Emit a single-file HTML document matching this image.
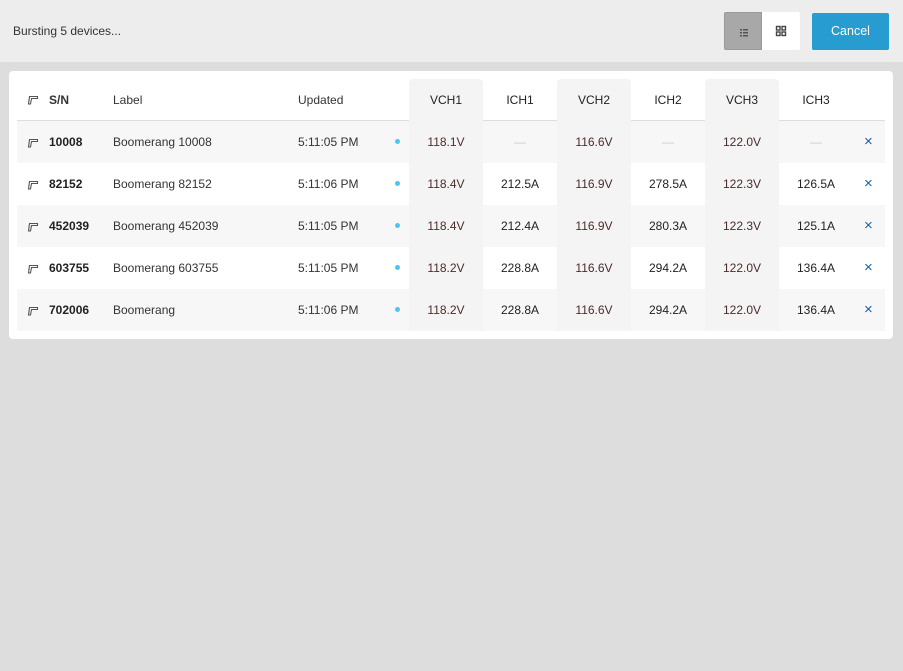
<!DOCTYPE html><html><head><style>
body{margin:0;width:903px;height:671px;background:#dddddd;font-family:"Liberation Sans",sans-serif;font-size:12px;color:#333;position:relative;overflow:hidden}
.top{position:absolute;left:0;top:0;width:903px;height:62px;background:#ededed}
.top .t{position:absolute;left:13px;top:24px;font-size:12px;color:#333}
.vb{position:absolute;top:12px;width:38px;height:38px}
.card{position:absolute;left:9px;top:71px;width:884px;height:268px;background:#fff;border-radius:4px}
.c{position:absolute;height:42px;line-height:42px}
.shade{position:absolute;top:79px;width:74px;height:251px;background:#f4f4f4;border-radius:4px 4px 0 0}
.row{position:absolute;left:17px;width:868px;height:42px}
.v{color:#4a2c2c;text-align:center;width:74px}
.a{text-align:center;width:74px;color:#222}
.dot{position:absolute;width:5px;height:5px;border-radius:50%;background:#4fc3f7}
</style></head><body>
<div class="top"><div class="t">Bursting 5 devices...</div>
<div class="vb" style="left:724px;background:#a8a8a8;border:1px solid #999;box-sizing:border-box;border-radius:2px 0 0 2px"><svg width="38" height="38"><g fill="#555"><rect x="15" y="16" width="2" height="1.5"/><rect x="18" y="16" width="5" height="1.5"/><rect x="15" y="19" width="2" height="1.5"/><rect x="18" y="19" width="5" height="1.5"/><rect x="15" y="22" width="2" height="1.5"/><rect x="18" y="22" width="5" height="1.5"/></g></svg></div>
<div class="vb" style="left:762px;background:#fff;border-radius:0 2px 2px 0"><svg width="38" height="38"><g fill="none" stroke="#444" stroke-width="1.4"><rect x="14.5" y="14.5" width="3.5" height="3.5"/><rect x="20" y="14.5" width="3.5" height="3.5"/><rect x="14.5" y="20" width="3.5" height="3.5"/><rect x="20" y="20" width="3.5" height="3.5"/></g></svg></div>
<div style="position:absolute;left:812px;top:13px;width:77px;height:37px;background:#279cd0;border-radius:2px;color:#fff;text-align:center;line-height:37px;font-size:12.5px">Cancel</div>
</div>
<div class="card"></div>
<div class="row" style="top:121px;background:#f7f7f7"></div>
<div class="row" style="top:205px;background:#f7f7f7"></div>
<div class="row" style="top:289px;background:#f7f7f7"></div>
<div style="position:absolute;left:17px;top:120px;width:868px;height:1px;background:#ddd"></div>
<div class="shade" style="left:409px"></div>
<div class="shade" style="left:557px"></div>
<div class="shade" style="left:705px"></div>
<div id="g"></div>
<script>
var icon='<svg width="12" height="10" style="position:absolute;left:27px;top:16px"><path d="M1.5 9 L2.5 1.5 L10.5 1.5 L10.5 3.5 L4.5 3.5 L3.5 9 Z" fill="none" stroke="#555" stroke-width="1.1"/></svg>';
var h='';
function cell(x,y,w,txt,cls,extra){h+='<div class="c '+(cls||'')+'" style="left:'+x+'px;top:'+y+'px;'+(w?'width:'+w+'px;':'')+(extra||'')+'">'+txt+'</div>';}
var y=79;
h+='<div style="position:absolute;left:0;top:'+(y)+'px">'+icon+'</div>';
cell(49,y,0,'S/N','','font-weight:bold');cell(113,y,0,'Label');cell(298,y,0,'Updated');
['VCH1','ICH1','VCH2','ICH2','VCH3','ICH3'].forEach(function(t,i){cell(409+74*i,y,74,t,'a')});
var d=[['10008','Boomerang 10008','5:11:05 PM','118.1V','—','116.6V','—','122.0V','—'],
['82152','Boomerang 82152','5:11:06 PM','118.4V','212.5A','116.9V','278.5A','122.3V','126.5A'],
['452039','Boomerang 452039','5:11:05 PM','118.4V','212.4A','116.9V','280.3A','122.3V','125.1A'],
['603755','Boomerang 603755','5:11:05 PM','118.2V','228.8A','116.6V','294.2A','122.0V','136.4A'],
['702006','Boomerang','5:11:06 PM','118.2V','228.8A','116.6V','294.2A','122.0V','136.4A']];
d.forEach(function(r,k){var y=121+42*k;
h+='<div style="position:absolute;left:0;top:'+(y+1)+'px">'+icon+'</div>';
cell(49,y,0,r[0],'','font-weight:bold;color:#222');cell(113,y,0,r[1]);cell(298,y,0,r[2]);
h+='<div class="dot" style="left:395px;top:'+(y+18)+'px"></div>';
for(var i=0;i<6;i++){var t=r[3+i];cell(409+74*i,y,74,t,i%2?'a':'v',t=='—'?'color:#ccc':'');}
cell(864,y,0,'×','','color:#1d5fa8;font-size:15px');
});
document.getElementById('g').innerHTML=h;
</script>
</body></html>
